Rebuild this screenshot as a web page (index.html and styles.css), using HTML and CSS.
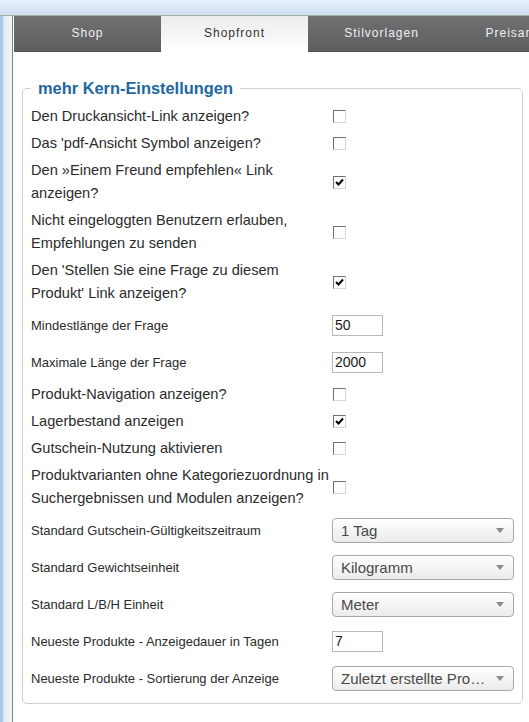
FILE: index.html
```html
<!DOCTYPE html>
<html lang="de">
<head>
<meta charset="utf-8">
<title>Shopfront</title>
<link rel="stylesheet" href="styles.css">
</head>
<body>
<div class="topband"></div>
<div class="frame">
  <div class="sidebar"></div>
  <div class="main">
    <nav class="tabs">
      <div class="tab">Shop</div>
      <div class="tab active">Shopfront</div>
      <div class="tab">Stilvorlagen</div>
      <div class="tab">Preisangaben</div>
    </nav>
    <fieldset class="box">
      <legend>mehr Kern-Einstellungen</legend>
      <div class="row"><div class="label">Den Druckansicht-Link anzeigen?</div><div class="ctl"><span class="cb"></span></div></div>
      <div class="row"><div class="label">Das 'pdf-Ansicht Symbol anzeigen?</div><div class="ctl"><span class="cb"></span></div></div>
      <div class="row"><div class="label">Den »Einem Freund empfehlen« Link anzeigen?</div><div class="ctl"><span class="cb"><svg viewBox="0 0 11 11" width="11" height="11"><path d="M2 5 L4.5 7.5 L9 2.5" fill="none" stroke="#000" stroke-width="2"/></svg></span></div></div>
      <div class="row"><div class="label">Nicht eingeloggten Benutzern erlauben, Empfehlungen zu senden</div><div class="ctl"><span class="cb"></span></div></div>
      <div class="row"><div class="label">Den 'Stellen Sie eine Frage zu diesem Produkt' Link anzeigen?</div><div class="ctl"><span class="cb"><svg viewBox="0 0 11 11" width="11" height="11"><path d="M2 5 L4.5 7.5 L9 2.5" fill="none" stroke="#000" stroke-width="2"/></svg></span></div></div>
      <div class="row tall"><div class="label small">Mindestlänge der Frage</div><div class="ctl"><span class="txt">50</span></div></div>
      <div class="row tall"><div class="label small">Maximale Länge der Frage</div><div class="ctl"><span class="txt">2000</span></div></div>
      <div class="row"><div class="label">Produkt-Navigation anzeigen?</div><div class="ctl"><span class="cb"></span></div></div>
      <div class="row"><div class="label">Lagerbestand anzeigen</div><div class="ctl"><span class="cb"><svg viewBox="0 0 11 11" width="11" height="11"><path d="M2 5 L4.5 7.5 L9 2.5" fill="none" stroke="#000" stroke-width="2"/></svg></span></div></div>
      <div class="row"><div class="label">Gutschein-Nutzung aktivieren</div><div class="ctl"><span class="cb"></span></div></div>
      <div class="row"><div class="label">Produktvarianten ohne Kategoriezuordnung in Suchergebnissen und Modulen anzeigen?</div><div class="ctl"><span class="cb"></span></div></div>
      <div class="row tall"><div class="label small">Standard Gutschein-Gültigkeitszeitraum</div><div class="ctl"><div class="sel"><span class="val">1 Tag</span><svg class="arr" viewBox="0 0 8 5" width="8" height="5"><path d="M0 0 H8 L4 5 Z" fill="#8a8a8a"/></svg></div></div></div>
      <div class="row tall"><div class="label small">Standard Gewichtseinheit</div><div class="ctl"><div class="sel"><span class="val">Kilogramm</span><svg class="arr" viewBox="0 0 8 5" width="8" height="5"><path d="M0 0 H8 L4 5 Z" fill="#8a8a8a"/></svg></div></div></div>
      <div class="row tall"><div class="label small">Standard L/B/H Einheit</div><div class="ctl"><div class="sel"><span class="val">Meter</span><svg class="arr" viewBox="0 0 8 5" width="8" height="5"><path d="M0 0 H8 L4 5 Z" fill="#8a8a8a"/></svg></div></div></div>
      <div class="row tall"><div class="label small">Neueste Produkte - Anzeigedauer in Tagen</div><div class="ctl"><span class="txt">7</span></div></div>
      <div class="row tall"><div class="label small">Neueste Produkte - Sortierung der Anzeige</div><div class="ctl"><div class="sel"><span class="val">Zuletzt erstellte Pro…</span><svg class="arr" viewBox="0 0 8 5" width="8" height="5"><path d="M0 0 H8 L4 5 Z" fill="#8a8a8a"/></svg></div></div></div>
    </fieldset>
  </div>
</div>
</body>
</html>
```

FILE: styles.css
```css
html, body {
  margin: 0;
  padding: 0;
  background: #ffffff;
  font-family: "Liberation Sans", Arial, sans-serif;
  color: #2b2b2b;
}
body {
  width: 529px;
  height: 722px;
  overflow: hidden;
}
.topband {
  height: 15px;
  background: linear-gradient(to bottom, #e6f0fa, #cfe0f3);
  border-bottom: 1px solid #a9a9a9;
}
.frame {
  display: flex;
  height: 706px;
}
.sidebar {
  width: 12px;
  flex: none;
  background: linear-gradient(to right, #a8c8ea 0, #a8c8ea 3px, #dfe8f2 3px, #eef2f6 10px, #f4f6f8 12px);
  border-right: 1px solid #7f7f7f;
}
.main {
  flex: 1;
  padding-left: 1px;
  background: #ffffff;
  overflow: hidden;
}
.tabs {
  display: flex;
  height: 36px;
  white-space: nowrap;
}
.tab {
  flex: none;
  width: 147px;
  height: 36px;
  line-height: 35px;
  text-align: center;
  font-size: 12px;
  letter-spacing: 1px;
  color: #f0f0f0;
  background: linear-gradient(to bottom, #707072, #5f5f61);
  border-bottom: 1px solid #505052;
  box-sizing: border-box;
}
.tab.active {
  color: #333333;
  background: linear-gradient(to bottom, #ececec, #ffffff);
  border-bottom: none;
}
.box {
  margin: 27px 6px 0 8px;
  padding: 5px 8px 6px 8px;
  border: 1px solid #cfcfcf;
  border-radius: 5px;
  min-width: 0;
}
.box legend {
  padding: 0 7px;
  font-size: 16.4px;
  font-weight: bold;
  color: #22679f;
  line-height: 19px;
}
.row {
  display: flex;
  align-items: center;
  padding: 2px 0;
}
.row.tall {
  height: 37px;
  padding: 0;
}
.label {
  width: 301px;
  flex: none;
  font-size: 14.6px;
  line-height: 23px;
}
.label.small {
  font-size: 13px;
}
.ctl {
  display: flex;
  align-items: center;
}
.cb {
  display: flex;
  align-items: center;
  justify-content: center;
  width: 13px;
  height: 13px;
  box-sizing: border-box;
  margin-left: 1px;
  border: 1px solid;
  border-color: #707070 #d6d6d6 #d6d6d6 #707070;
  background: #ffffff;
}
.cb svg {
  display: block;
}
.txt {
  display: block;
  width: 51px;
  height: 21px;
  box-sizing: border-box;
  border: 1px solid #b9b9b9;
  padding-left: 2px;
  font-size: 14px;
  line-height: 19px;
  color: #1a1a1a;
}
.sel {
  display: flex;
  align-items: center;
  justify-content: space-between;
  width: 182px;
  height: 25px;
  box-sizing: border-box;
  border: 1px solid #a8a8a8;
  border-radius: 4px;
  padding: 0 9px 0 8px;
  background: linear-gradient(to bottom, #ffffff, #ebebeb);
  font-size: 15px;
  color: #4a4a4a;
}
.sel .val {
  white-space: nowrap;
}
.sel .arr {
  display: block;
  flex: none;
}
```
